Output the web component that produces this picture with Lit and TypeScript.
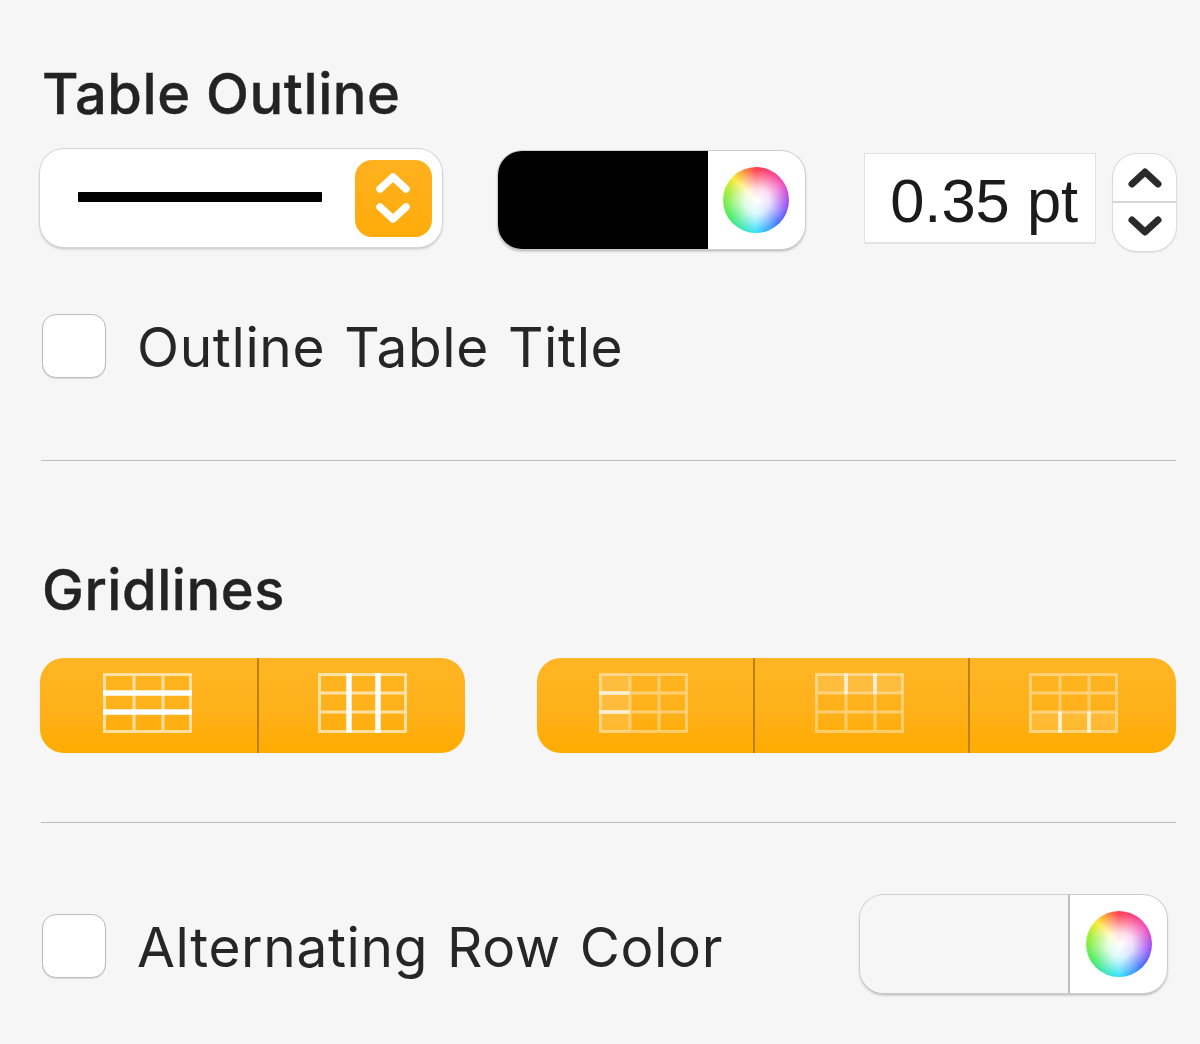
import { LitElement, html, css, svg } from "lit";
import { customElement } from "lit/decorators.js";

type Bold = "rows" | "cols";
type Fill = "none" | "left" | "top" | "bottom";

function gridIcon(bold: Bold, fill: Fill, dim: boolean) {
  const xs = [31, 60];
  const ys = [20, 39];
  const base = dim ? 0.38 : 0.6;
  const boldOpacity = dim ? 0.62 : 1;
  const boldW = dim ? 4 : 5.5;
  const fills: Record<Fill, number[] | null> = {
    none: null,
    left: [0, 0, 30, 60],
    top: [0, 0, 89, 20],
    bottom: [0, 39, 89, 21],
  };
  const f = fills[fill];
  return html`<svg class="grid" viewBox="0 0 89 60" width="89" height="60" aria-hidden="true">
    ${f ? svg`<rect x=${f[0]} y=${f[1]} width=${f[2]} height=${f[3]} fill="#fff" opacity=".14"></rect>` : ""}
    ${svg`<g stroke="#fff" stroke-width="3" opacity=${base} fill="none">
      <rect x="1.5" y="1.5" width="86" height="57"></rect>
      ${xs.map((x) => svg`<path d="M${x} 0V60"></path>`)}
      ${ys.map((y) => svg`<path d="M0 ${y}H89"></path>`)}
    </g>`}
    ${svg`<g stroke="#fff" stroke-width=${boldW} opacity=${boldOpacity} stroke-linecap="round">
      ${bold === "rows"
        ? ys.map((y) => svg`<path d="M1 ${y}H${dim ? 29 : 88}"></path>`)
        : xs.map((x) => {
            const a = dim ? (fill === "top" ? 0 : 39) : 0;
            const b = dim ? (fill === "top" ? 21 : 60) : 60;
            return svg`<path d="M${x} ${a + 1}V${b - 1}"></path>`;
          })}
    </g>`}
  </svg>`;
}

@customElement("app-root")
export class AppRoot extends LitElement {
  static styles = css`
    :host {
      display: block;
      width: 1200px;
      height: 1044px;
      box-sizing: border-box;
      overflow: hidden;
      background: #f6f6f6;
      color: #232323;
      font-family: Inter, "Noto Sans", sans-serif;
      padding: 0 24px 0 40px;
    }
    h2 {
      margin: 0 0 0 2px;
      font-size: 56px;
      font-weight: 500;
      line-height: 60px;
      letter-spacing: 0.55px;
      -webkit-text-stroke: 0.4px #232323;
    }
    .title-outline { padding-top: 64px; }
    .title-grid { padding-top: 99px; }
    .row { display: flex; align-items: flex-start; }
    .outline-row { margin-top: 25px; height: 105px; }
    .select {
      box-sizing: border-box;
      width: 403px;
      height: 98px;
      border-radius: 24px;
      background: #fff;
      box-shadow: 0 0 0 1px #d4d4d4, 0 2px 3px rgba(0, 0, 0, 0.22);
      display: flex;
      align-items: center;
      padding-left: 38px;
      padding-right: 10px;
    }
    .stroke { width: 244px; height: 10px; background: #000; margin-top: -2px; border-radius: 1px; }
    .popup {
      margin-left: auto;
      width: 77px;
      height: 77px;
      border-radius: 17px;
      background: linear-gradient(#ffb11f, #ffab0a);
      display: flex;
      align-items: center;
      justify-content: center;
    }
    .well {
      box-sizing: border-box;
      width: 307px;
      height: 98px;
      border-radius: 24px;
      background: #fff;
      box-shadow: 0 0 0 1px #cdcdcd, 0 2px 3px rgba(0, 0, 0, 0.3);
      display: flex;
      overflow: hidden;
      flex: none;
    }
    .well.top { margin: 2px 0 0 56px; }
    .swatch { width: 210px; background: #000; flex: none; }
    .swatch.empty { background: #f6f6f6; border-right: 2px solid #bdbdbd; box-sizing: border-box; }
    .wheel-slot { flex: 1; display: flex; align-items: center; justify-content: center; }
    .wheel {
      width: 66px;
      height: 66px;
      border-radius: 50%;
      background:
        radial-gradient(circle at 52% 52%, #fff 0%, rgba(255, 255, 255, 0.82) 26%, rgba(255, 255, 255, 0) 66%),
        conic-gradient(#ff3f50, #f04cc0 60deg, #9144f5 100deg, #3464ff 135deg, #2fe0ff 180deg, #45ec65 235deg, #a0ee3c 285deg, #fdea3c 315deg, #ff3f50);
    }
    .field {
      box-sizing: border-box;
      width: 231px;
      height: 88px;
      margin: 5px 0 0 60px;
      background: #fff;
      box-shadow: 0 0 0 1px #e2e2e2, 0 1px 1px rgba(0, 0, 0, 0.45);
      font-family: "Liberation Sans", Arial, sans-serif;
      font-size: 61.5px;
      line-height: 93px;
      text-align: right;
      padding-right: 17px;
      color: #1b1b1b;
      white-space: nowrap;
    }
    .stepper {
      box-sizing: border-box;
      width: 63px;
      height: 97px;
      margin: 5px 0 0 18px;
      border-radius: 24px;
      background: #fff;
      box-shadow: 0 0 0 1px #dadada, 0 1px 2px rgba(0, 0, 0, 0.2);
      display: grid;
      grid-template-rows: 1fr 1fr;
      justify-items: center;
      align-items: center;
    }
    .step-up { width: 100%; height: 100%; display: flex; align-items: center; justify-content: center; border-bottom: 2px solid #d6d6d6; box-sizing: border-box; }
    .step-down { width: 100%; height: 100%; display: flex; align-items: center; justify-content: center; }
    .check-row { display: flex; align-items: center; margin-left: 2px; }
    .check-row.first { margin-top: 59px; height: 66px; }
    .box {
      box-sizing: border-box;
      width: 64px;
      height: 64px;
      flex: none;
      border-radius: 14px;
      background: #fff;
      border: 1px solid #bcbcbc;
      box-shadow: 0 1px 1px rgba(0, 0, 0, 0.12);
    }
    .label {
      margin-left: 31px;
      padding-top: 2px;
      font-size: 55px;
      letter-spacing: 0.63px;
      word-spacing: 3px;
      line-height: 64px;
      white-space: nowrap;
      color: #262626;
    }
    hr {
      margin: 0 0 0 1px;
      border: 0;
      height: 1px;
      width: 1135px;
      background: #bdbdbd;
    }
    .hr-1 { margin-top: 81px; }
    .seg-row { margin-top: 38px; display: flex; justify-content: space-between; width: 1136px; }
    .seg {
      height: 95px;
      border-radius: 24px;
      background: linear-gradient(#ffb524 0%, #ffb11a 55%, #ffab00 100%);
      display: flex;
      overflow: hidden;
    }
    .seg-cell {
      box-sizing: border-box;
      display: flex;
      align-items: flex-start;
      justify-content: center;
      padding-top: 15px;
      flex: none;
    }
    .seg-cell + .seg-cell { border-left: 2px solid #bd8112; }
    .hr-2 { margin-top: 69px; }
    .alt-row {
      display: flex;
      align-items: flex-start;
      margin-top: 72px;
      margin-left: 2px;
    }
    .alt-row .check-row { margin-left: 0; margin-top: 19px; height: 64px; }
    .alt-row .well { margin-left: auto; margin-right: 9px; margin-top: 0; }
    .seg-wrap-a { width: 425px; }
    .seg-wrap-b { width: 639px; }
  `;

  private well(extra: string, swatch: string) {
    return html`<div class="well ${extra}">
      <div class="swatch ${swatch}"></div>
      <div class="wheel-slot"><div class="wheel"></div></div>
    </div>`;
  }

  private seg(cells: { w: number; pad: number; bold: Bold; fill: Fill; dim: boolean }[]) {
    return html`<div class="seg">
      ${cells.map(
        (c) => html`<div class="seg-cell" style="width:${c.w}px;padding-right:${c.pad}px">${gridIcon(c.bold, c.fill, c.dim)}</div>`
      )}
    </div>`;
  }

  render() {
    return html`
      <h2 class="title-outline">Table Outline</h2>
      <div class="row outline-row">
        <div class="select">
          <div class="stroke"></div>
          <div class="popup">
            <svg width="36" height="52" viewBox="0 0 36 52" aria-hidden="true">
              <path d="M5 17L18 5L31 17M5 35L18 47L31 35" fill="none" stroke="#fff" stroke-width="7.5" stroke-linecap="round" stroke-linejoin="round"></path>
            </svg>
          </div>
        </div>
        ${this.well("top", "")}
        <div class="field">0.35 pt</div>
        <div class="stepper">
          <div class="step-up">
            <svg width="36" height="24" viewBox="0 0 36 24" aria-hidden="true"><path d="M5 19L18 7L31 19" fill="none" stroke="#2a2a2a" stroke-width="7" stroke-linecap="round" stroke-linejoin="round"></path></svg>
          </div>
          <div class="step-down">
            <svg width="36" height="24" viewBox="0 0 36 24" aria-hidden="true"><path d="M5 5L18 17L31 5" fill="none" stroke="#2a2a2a" stroke-width="7" stroke-linecap="round" stroke-linejoin="round"></path></svg>
          </div>
        </div>
      </div>
      <div class="check-row first">
        <div class="box"></div>
        <span class="label">Outline Table Title</span>
      </div>
      <hr class="hr-1" />
      <h2 class="title-grid">Gridlines</h2>
      <div class="seg-row">
        <div class="seg-wrap-a">
          ${this.seg([
            { w: 217, pad: 2, bold: "rows", fill: "none", dim: false },
            { w: 208, pad: 0, bold: "cols", fill: "none", dim: false },
          ])}
        </div>
        <div class="seg-wrap-b">
          ${this.seg([
            { w: 216, pad: 4, bold: "rows", fill: "left", dim: true },
            { w: 215, pad: 4, bold: "cols", fill: "top", dim: true },
            { w: 208, pad: 0, bold: "cols", fill: "bottom", dim: true },
          ])}
        </div>
      </div>
      <hr class="hr-2" />
      <div class="alt-row">
        <div class="check-row">
          <div class="box"></div>
          <span class="label">Alternating Row Color</span>
        </div>
        ${this.well("", "empty")}
      </div>
    `;
  }
}
